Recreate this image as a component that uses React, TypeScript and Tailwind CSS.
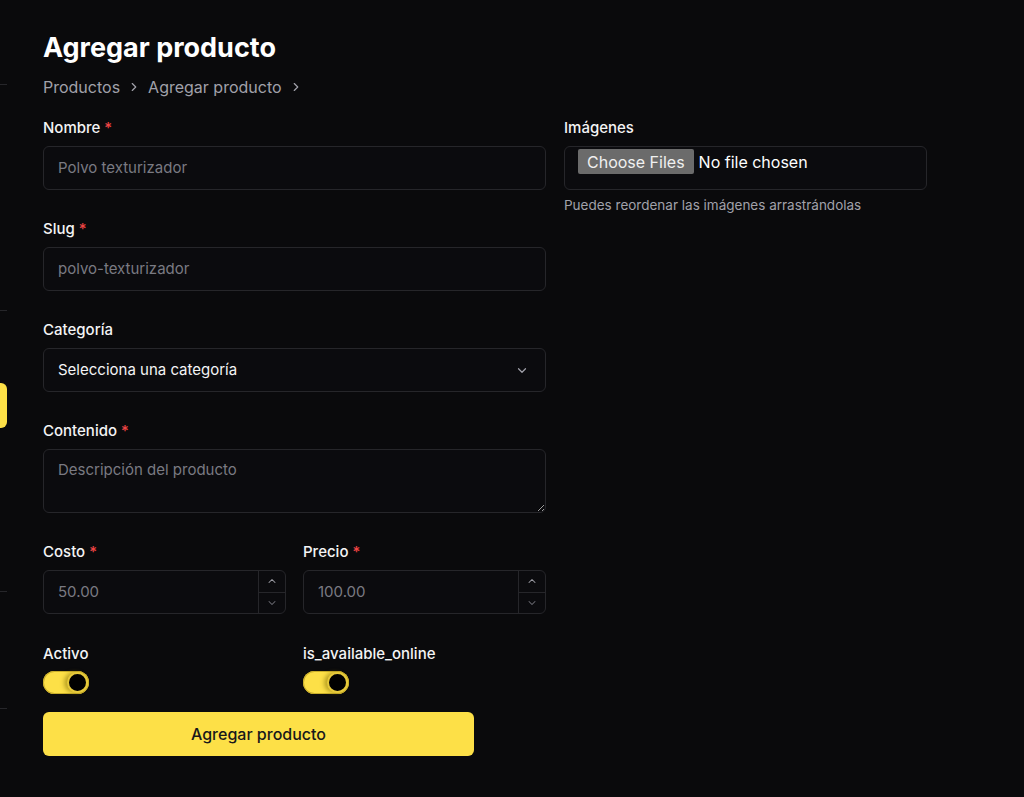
import React from "react";

const font = { fontFamily: "Inter, 'Noto Sans', sans-serif" };

function Label({ text, required }: { text: string; required?: boolean }) {
  return (
    <div className="h-6 text-[15px] leading-6 font-medium text-[#f4f4f5]">
      {text}
      {required && <span className="ml-1 text-[#ef4444]">*</span>}
    </div>
  );
}

function TextInput({ placeholder }: { placeholder: string }) {
  return (
    <div className="mt-[6px] flex h-[44px] items-center rounded-md border border-[#26262a] bg-[#0b0b0e] px-[14px] text-[15px] text-[#7a7a82]">
      {placeholder}
    </div>
  );
}

function Chevron({ dir, className }: { dir: "up" | "down"; className?: string }) {
  return (
    <svg viewBox="0 0 12 8" className={className} fill="none" stroke="currentColor" strokeWidth="1.4" strokeLinecap="round" strokeLinejoin="round">
      {dir === "down" ? <path d="M2 2l4 4 4-4" /> : <path d="M2 6l4-4 4 4" />}
    </svg>
  );
}

function NumberInput({ value }: { value: string }) {
  return (
    <div className="mt-[6px] flex h-[44px] rounded-md border border-[#26262a] bg-[#0b0b0e]">
      <div className="flex flex-1 items-center px-[14px] text-[15px] text-[#7a7a82]">{value}</div>
      <div className="flex w-[27px] flex-col border-l border-[#26262a]">
        <div className="flex flex-1 items-center justify-center border-b border-[#26262a] text-[#9a9aa2]">
          <Chevron dir="up" className="h-[6px] w-[10px]" />
        </div>
        <div className="flex flex-1 items-center justify-center text-[#6b6b73]">
          <Chevron dir="down" className="h-[6px] w-[10px]" />
        </div>
      </div>
    </div>
  );
}

function Toggle() {
  return (
    <div className="mt-[5px] flex h-[23px] w-[46px] items-center justify-end rounded-full bg-[#fde047] pr-[1px] shadow-[inset_0_0_0_1px_#c9ae2a]">
      <div className="h-[21px] w-[21px] rounded-full border-2 border-[#e6c93a] bg-black shadow-[-3px_0_4px_rgba(120,100,0,0.5)]" />
    </div>
  );
}

function Field({ children, className }: { children: React.ReactNode; className?: string }) {
  return <div className={"flex flex-col " + (className ?? "")}>{children}</div>;
}

export default function App() {
  return (
    <div className="flex min-h-[797px] w-full bg-[#0a0a0c]" style={font}>
      {/* collapsed sidebar edge */}
      <div className="flex w-[7px] shrink-0 flex-col">
        <div className="h-[84px]" />
        <div className="h-px bg-[#26262a]" />
        <div className="h-[225px]" />
        <div className="h-px bg-[#26262a]" />
        <div className="h-[72px]" />
        <div className="h-[45px] rounded-r-md bg-[#fde047]" />
        <div className="h-[163px]" />
        <div className="h-px bg-[#26262a]" />
        <div className="h-[116px]" />
        <div className="h-px bg-[#26262a]" />
      </div>

      <main className="flex-1 pl-9 pt-[30px]">
        <h1 className="text-[27px] font-bold leading-9 text-white">Agregar producto</h1>
        <nav className="mt-[9px] flex h-6 items-center text-[16px] leading-6 text-[#a1a1aa]">
          <span>Productos</span>
          <svg viewBox="0 0 24 24" className="mx-[7px] h-[14px] w-[14px]" fill="none" stroke="currentColor" strokeWidth="2" strokeLinecap="round" strokeLinejoin="round">
            <path d="M9 18l6-6-6-6" />
          </svg>
          <span>Agregar producto</span>
          <svg viewBox="0 0 24 24" className="ml-[7px] h-[14px] w-[14px]" fill="none" stroke="currentColor" strokeWidth="2" strokeLinecap="round" strokeLinejoin="round">
            <path d="M9 18l6-6-6-6" />
          </svg>
        </nav>

        <div className="mt-[17px] flex gap-[18px]">
          <div className="flex w-[503px] flex-col gap-[27px]">
            <Field>
              <Label text="Nombre" required />
              <TextInput placeholder="Polvo texturizador" />
            </Field>
            <Field>
              <Label text="Slug" required />
              <TextInput placeholder="polvo-texturizador" />
            </Field>
            <Field>
              <Label text="Categoría" />
              <div className="mt-[6px] flex h-[44px] items-center justify-between rounded-md border border-[#26262a] bg-[#0b0b0e] pl-[14px] pr-[17px] text-[15px] text-[#f4f4f5]">
                <span>Selecciona una categoría</span>
                <Chevron dir="down" className="h-[7px] w-[12px] text-[#a1a1aa]" />
              </div>
            </Field>
            <Field>
              <Label text="Contenido" required />
              <textarea
                placeholder="Descripción del producto"
                className="mt-[6px] h-[64px] resize-y rounded-md border border-[#26262a] bg-[#0b0b0e] px-[14px] py-[9px] text-[15px] text-[#f4f4f5] placeholder:text-[#7a7a82] outline-none"
                style={{ colorScheme: "dark" }}
              />
            </Field>
            <div className="grid grid-cols-2 gap-[17px]">
              <Field>
                <Label text="Costo" required />
                <NumberInput value="50.00" />
              </Field>
              <Field>
                <Label text="Precio" required />
                <NumberInput value="100.00" />
              </Field>
            </div>
            <div className="mt-[1px] grid grid-cols-2 gap-[17px]">
              <Field>
                <Label text="Activo" />
                <Toggle />
              </Field>
              <Field>
                <Label text="is_available_online" />
                <Toggle />
              </Field>
            </div>
            <button className="-mt-[9px] flex h-[44px] w-[431px] items-center justify-center rounded-md bg-[#fde047] text-[16px] font-medium text-[#18181b]">
              Agregar producto
            </button>
          </div>

          <div className="flex w-[363px] flex-col">
            <Label text="Imágenes" />
            <div className="mt-[6px] flex h-[44px] items-start rounded-md border border-[#26262a] bg-[#0b0b0e] pl-[13px] pt-[2px]">
              <span className="flex h-[25px] items-center rounded-[2px] bg-[#6b6b6b] px-[9px] text-[16px] text-[#f0f0f0]">Choose Files</span>
              <span className="ml-[5px] flex h-[25px] items-center text-[16px] text-white">No file chosen</span>
            </div>
            <div className="mt-[5px] text-[13.5px] leading-5 text-[#a1a1aa]">Puedes reordenar las imágenes arrastrándolas</div>
          </div>
        </div>
      </main>
    </div>
  );
}
